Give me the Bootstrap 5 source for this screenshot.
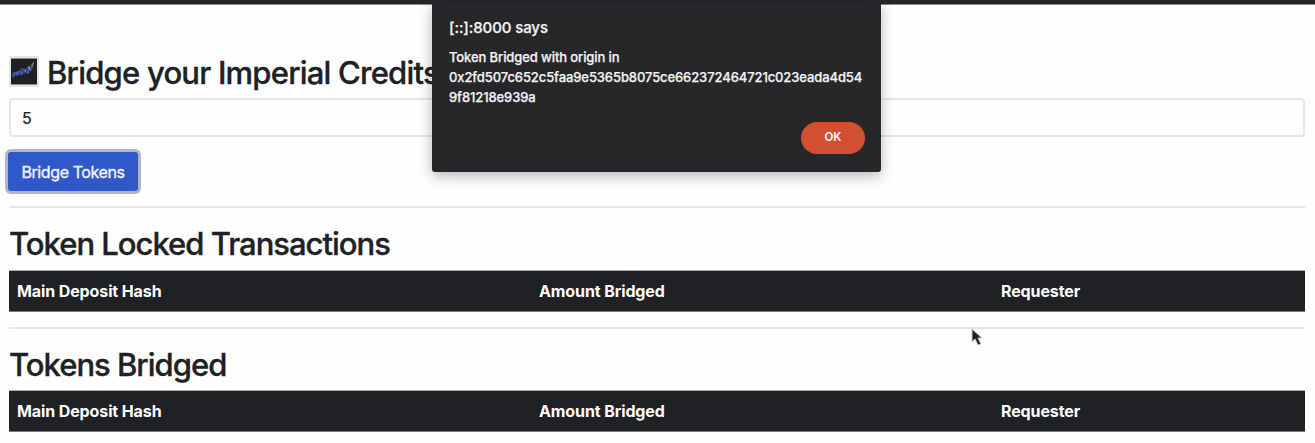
<!DOCTYPE html>
<html lang="en">
<head>
<meta charset="utf-8">
<meta name="viewport" content="width=device-width, initial-scale=1">
<title>Bridge</title>
<link href="https://cdn.jsdelivr.net/npm/bootstrap@5.3.0/dist/css/bootstrap.min.css" rel="stylesheet">
<style>
body{font-family:Inter,"Liberation Sans",sans-serif;color:#202124;background:#fefefe;height:443px;overflow:hidden}
.browser-edge{height:5px;background:#252628;border-bottom:1px solid #85868a}
.page-body{padding:49px 10px 0 9px}
h2{font-size:31px;line-height:38px;font-weight:500;white-space:nowrap;letter-spacing:-1px;margin:0;-webkit-text-stroke:.35px #202124}
.page-title{height:38px;gap:8px}
.page-title h2{letter-spacing:-.78px}
.token-icon{width:30px;height:31px;flex:none;border:2px solid #e4e5e7;margin-top:-3px}
.amount{height:39px;border:2px solid #e5e6e7;border-radius:4px;font-size:16px;color:#202124;padding:0 11px;margin-top:6px;background:#fefefe;-webkit-text-stroke:.2px #202124}
.bridge-btn,.bridge-btn:hover{display:block;width:130px;height:39px;margin:15px 0 0 -1px;background:#3158ca;color:#f3f5fb;border:0;border-radius:3px;padding:0;font-size:16px;letter-spacing:-.4px;box-shadow:0 0 0 3px #b2b6bf;-webkit-text-stroke:.35px #f3f5fb}
.rule{height:2px;background:#e5e6e8;margin:15px 0 17px}
.rule-second{margin-top:15px}
.events{margin:7px 0 0;table-layout:fixed;border-collapse:separate;border-spacing:0}
.events-last{margin-top:6px}
.events th{height:42px;padding:0 8px;background:#202124;color:#fefefe;font-size:16px;font-weight:700;letter-spacing:-.11px;border-top:1px solid #a9adb1;border-bottom:1px solid #77797c;box-shadow:none;vertical-align:middle}
.alert-box{left:432px;top:3px;width:449px;height:169px;background:#272729;color:#f1f2f4;border-radius:0 0 3px 3px;box-shadow:0 4px 14px rgba(32,35,48,.32);padding:15px 17px}
.alert-origin{font-size:15px;line-height:20px;font-weight:500;letter-spacing:-.1px;-webkit-text-stroke:.25px #f1f2f4}
.alert-message{font-size:13px;line-height:20px;margin-top:9px;font-weight:500;white-space:nowrap;letter-spacing:-.1px;-webkit-text-stroke:.25px #f1f2f4}
.ok-btn{right:16px;bottom:18px;width:64px;height:32px;border-radius:16px;background:#d34f32;color:#fff;font-size:11.5px;font-weight:600;padding:0;border:0}
.pointer{left:970px;top:328px}
</style>
</head>
<body>
<div class="browser-edge"></div>
<main class="page-body">
  <div class="page-title d-flex align-items-center">
    <svg class="token-icon" viewBox="0 0 27 27"><path fill="#202124" d="M0 0h27v27H0z"/><path d="M2 17l4-3 5-2 5-2 4-3 4-2-2 5-4 4-5 2-4 2-4-1z" fill="#303f69"/><path d="M1 17h2v-2h2M4 17h2v-3M7 13v4M9 12v3M11 17v-3h2M12 11h2M15 11v3M16 15h2v-3M19 9v3M21 9v2" stroke="#426be0" stroke-width="1.2" fill="none"/><path d="M2 19h1M17 9h2v2M19 12h2M22 6v3M23 4v2M14 13h1M10 11h1" stroke="#a5abb6" stroke-width="1" fill="none"/></svg>
    <h2>Bridge your Imperial Credits</h2>
  </div>
  <input class="amount form-control" type="text" value="5" aria-label="Amount">
  <button class="btn bridge-btn" type="button">Bridge Tokens</button>
  <div class="rule"></div>
  <h2>Token Locked Transactions</h2>
  <table class="table events">
    <colgroup><col style="width:522px"><col style="width:462px"><col></colgroup>
    <thead><tr><th>Main Deposit Hash</th><th>Amount Bridged</th><th>Requester</th></tr></thead>
  </table>
  <div class="rule rule-second"></div>
  <h2>Tokens Bridged</h2>
  <table class="table events events-last">
    <colgroup><col style="width:522px"><col style="width:462px"><col></colgroup>
    <thead><tr><th>Main Deposit Hash</th><th>Amount Bridged</th><th>Requester</th></tr></thead>
  </table>
</main>
<div class="alert-box position-absolute" role="alertdialog">
  <div class="alert-origin">[::]:8000 says</div>
  <div class="alert-message">Token Bridged with origin in<br>0x2fd507c652c5faa9e5365b8075ce662372464721c023eada4d54<br>9f81218e939a</div>
  <button class="btn ok-btn position-absolute" type="button">OK</button>
</div>
<svg class="pointer position-absolute" width="16" height="20" viewBox="0 0 16 20"><path d="M2 1v13l3-3 3 6 3-1-3-6h4z" fill="#202124" stroke="#c8c9cd" stroke-width="1"/></svg>
</body>
</html>
